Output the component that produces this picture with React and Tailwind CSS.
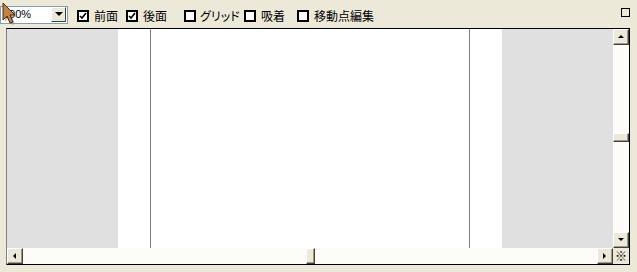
import React from "react";

const font = { fontFamily: '"MS UI Gothic", "Noto Sans CJK JP", "Noto Sans", sans-serif' };

function Check({ checked, className = "" }) {
  return (
    <div className={`w-[12px] h-[12px] border-2 border-black bg-white flex items-center justify-center ${className}`}>
      {checked && (
        <svg width="8" height="8" viewBox="0 0 8 8">
          <path d="M1 4 L3 6 L7 1" stroke="#000" strokeWidth="1.6" fill="none" />
        </svg>
      )}
    </div>
  );
}

function Btn({ dir }) {
  const pts = {
    up: "1,5 4,2 7,5",
    down: "1,2 4,5 7,2",
    left: "5,1 2,4 5,7",
    right: "2,1 5,4 2,7",
  }[dir];
  return (
    <div className="w-[16px] h-[16px] bg-[#ECE9D8] border border-t-white border-l-white border-r-[#404040] border-b-[#404040] shadow-[inset_-1px_-1px_0_#9d9a8c] flex items-center justify-center shrink-0">
      <svg width="8" height="8" viewBox="0 0 8 8">
        <polygon points={pts} fill="#000" />
      </svg>
    </div>
  );
}

function Thumb({ className }) {
  return (
    <div className={`bg-[#ECE9D8] border border-t-white border-l-white border-r-[#404040] border-b-[#404040] shadow-[inset_-1px_-1px_0_#9d9a8c] ${className}`} />
  );
}

export default function App() {
  return (
    <div className="relative w-[637px] h-[272px] bg-[#ECE9D8] overflow-hidden text-[12px] text-black" style={font}>
      {/* toolbar */}
      <div className="flex items-center h-[28px] [font-feature-settings:'palt']">
        <div className="w-[68px] h-[18px] mt-[1px] bg-white border border-[#7f9db9] flex items-center justify-between">
          <span className="pl-[2px] text-[11px] leading-none" style={{ fontFamily: '"Liberation Sans", sans-serif' }}>100%</span>
          <div className="w-[15px] h-[15px] mr-[1px] bg-[#ECE9D8] border border-t-white border-l-white border-r-[#404040] border-b-[#404040] flex items-center justify-center">
            <svg width="8" height="5" viewBox="0 0 8 5">
              <polygon points="0,0 8,0 4,4" fill="#000" />
            </svg>
          </div>
        </div>
        <Check checked className="ml-[9px] mt-[3px]" />
        <span className="ml-[5px] w-[26px] mt-[3px] whitespace-nowrap">前面</span>
        <Check checked className="ml-[6px] mt-[3px]" />
        <span className="ml-[5px] w-[26px] mt-[3px] whitespace-nowrap">後面</span>
        <Check className="ml-[15px] mt-[3px]" />
        <span className="ml-[4px] w-[40px] mt-[3px] whitespace-nowrap">グリッド</span>
        <Check className="ml-[4px] mt-[3px]" />
        <span className="ml-[5px] w-[26px] mt-[3px] whitespace-nowrap">吸着</span>
        <Check className="ml-[10px] mt-[3px]" />
        <span className="ml-[5px] w-[62px] mt-[3px] whitespace-nowrap">移動点編集</span>
        <div className="ml-auto mr-[7px] mb-[4px] w-[9px] h-[9px] border border-black" />
      </div>

      {/* frame */}
      <div className="ml-[6px] w-[624px] h-[237px] border border-black border-l-[#808080] flex flex-col">
        <div className="flex h-[219px]">
          <div className="w-[606px] h-full flex">
            <div className="w-[111px] bg-[#E0E0E0]" />
            <div className="w-[384px] bg-white flex">
              <div className="w-[32px]" />
              <div className="w-px bg-[#808080]" />
              <div className="flex-1" />
              <div className="w-px bg-[#808080]" />
              <div className="w-[32px]" />
            </div>
            <div className="flex-1 bg-[#E0E0E0]" />
          </div>
          <div className="w-[16px] h-full flex flex-col bg-[#fdfcf8]">
            <Btn dir="up" />
            <div className="flex-1 flex flex-col">
              <div className="h-[88px]" />
              <Thumb className="h-[9px] w-full" />
            </div>
            <Btn dir="down" />
          </div>
        </div>
        <div className="flex h-[16px]">
          <div className="w-[606px] flex bg-[#fdfcf8]">
            <Btn dir="left" />
            <div className="flex-1 flex">
              <div className="w-[283px]" />
              <Thumb className="w-[9px] h-full" />
            </div>
            <Btn dir="right" />
          </div>
          <div className="w-[16px] bg-[#ECE9D8] flex items-center justify-center text-[12px] leading-none">※</div>
        </div>
      </div>

      {/* mouse cursor */}
      <svg className="absolute left-[2px] top-[2px]" width="16" height="24" viewBox="0 0 16 24">
        <polygon points="3,3 3,20 7,16 10,23 13,22 10,15 15,15" fill="#888" opacity="0.5" />
        <polygon points="1,1 1,18 5,14 8,21 11,20 8,13 13,13" fill="#c58140" stroke="#4a2a10" strokeWidth="1" strokeLinejoin="round" />
      </svg>
    </div>
  );
}
